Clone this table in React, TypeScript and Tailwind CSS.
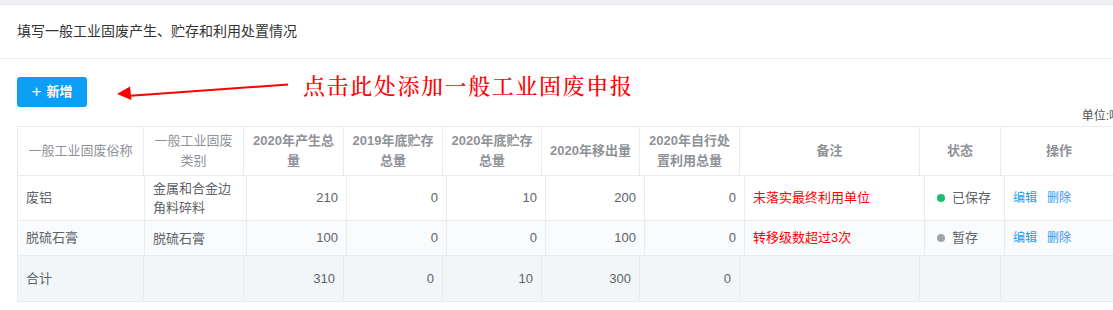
import React from 'react';

// column widths: header & total row share one set, body rows are a few px off (fixed-column table)
const HEAD_COLS = 'grid-cols-[126px_100px_100px_99px_99px_98px_100px_180px_81px_117px]';
const BODY_COLS = 'grid-cols-[127px_102px_100px_100px_99px_99px_100px_180px_80px_113px]';

const HEADERS: { label: React.ReactNode; bold: boolean }[] = [
  { label: '一般工业固废俗称', bold: false },
  { label: <>一般工业固废<br />类别</>, bold: false },
  { label: <>2020年产生总<br />量</>, bold: true },
  { label: <>2019年底贮存<br />总量</>, bold: true },
  { label: <>2020年底贮存<br />总量</>, bold: true },
  { label: '2020年移出量', bold: true },
  { label: <>2020年自行处<br />置利用总量</>, bold: true },
  { label: '备注', bold: true },
  { label: '状态', bold: true },
  { label: '操作', bold: true },
];

const ROWS = [
  {
    name: '废铝',
    type: <>金属和合金边<br />角料碎料</>,
    nums: [210, 0, 10, 200, 0],
    note: '未落实最终利用单位',
    status: '已保存',
    saved: true,
    h: 'h-[45px]',
    bg: 'bg-white',
  },
  {
    name: '脱硫石膏',
    type: '脱硫石膏',
    nums: [100, 0, 0, 100, 0],
    note: '转移级数超过3次',
    status: '暂存',
    saved: false,
    h: 'h-[35px]',
    bg: 'bg-[#fafbfd]',
  },
];

const TOTALS = [310, 0, 10, 300, 0];

const cell = 'border-r border-b border-[#e8ebf0] flex items-center';

const Arrow = () => (
  <svg width="172" height="20" viewBox="0 0 172 20" className="shrink-0">
    <line x1="10" y1="15" x2="171" y2="3.5" stroke="#ff0000" strokeWidth="2" />
    <polygon points="0,16 13,8.5 14.5,22" fill="#ff0000" transform="translate(0,-3)" />
  </svg>
);

const App: React.FC = () => {
  return (
    <div className="w-[1113px] h-[310px] overflow-hidden bg-white font-['Liberation_Sans','Noto_Sans_CJK_SC',sans-serif]">
      <div className="w-[1140px]">
        <div className="h-[5px] bg-[#eef0f4] border-b border-[#e3e6eb]" />

        <div className="h-[54px] flex items-center px-[17px] text-[14px] text-[#333] border-b border-[#ebedf2]">
          填写一般工业固废产生、贮存和利用处置情况
        </div>

        <div className="flex items-center mt-[18px] pl-[17px]">
          <button className="w-[70px] h-[30px] rounded-[3px] bg-[#0ba0f6] text-white text-[13px] font-bold flex items-center justify-center gap-[5px]">
            <span className="text-[17px] font-light leading-none -mt-[2px]">+</span>
            <span>新增</span>
          </button>
          <div className="ml-[30px] mt-[-2px]">
            <Arrow />
          </div>
          <span className="ml-[14px] -mt-[16px] text-[22px] tracking-[1.6px] text-[#ff0000] font-medium font-['Noto_Serif_CJK_SC','Noto_Sans_CJK_SC',serif]">
            点击此处添加一般工业固废申报
          </span>
        </div>

        <div className="w-[1121px] flex justify-end text-[12px] text-[#555] mt-[-2px] h-[21px] items-center">
          单位:吨
        </div>

        <div className="ml-[17px] w-[1100px] border-t border-l border-[#e8ebf0]">
          <div className={`grid ${HEAD_COLS} h-[49px] bg-white`}>
            {HEADERS.map((h, i) => (
              <div
                key={i}
                className={`${cell} justify-center text-center text-[13px] leading-[20px] text-[#8f9297] ${h.bold ? 'font-bold' : 'font-normal'}`}
              >
                {h.label}
              </div>
            ))}
          </div>

          {ROWS.map((r) => (
            <div key={r.name} className={`grid ${BODY_COLS} ${r.h} ${r.bg} text-[13px] text-[#606368]`}>
              <div className={`${cell} px-[8px]`}>{r.name}</div>
              <div className={`${cell} px-[8px] leading-[19px]`}>{r.type}</div>
              {r.nums.map((n, i) => (
                <div key={i} className={`${cell} justify-end px-[8px]`}>{n}</div>
              ))}
              <div className={`${cell} px-[8px] text-[#ff0000]`}>{r.note}</div>
              <div className={`${cell} pl-[12px] gap-[7px]`}>
                <span className={`w-[8px] h-[8px] rounded-full ${r.saved ? 'bg-[#19be6b]' : 'bg-[#a0a4ab]'}`} />
                <span>{r.status}</span>
              </div>
              <div className={`${cell} pl-[8px] gap-[10px] text-[12px] text-[#1c9ff0]`}>
                <span>编辑</span>
                <span>删除</span>
              </div>
            </div>
          ))}

          <div className={`grid ${HEAD_COLS} h-[46px] bg-[#f3f6f9] text-[13px] text-[#606368]`}>
            <div className={`${cell} px-[8px]`}>合计</div>
            <div className={cell} />
            {TOTALS.map((n, i) => (
              <div key={i} className={`${cell} justify-end px-[8px]`}>{n}</div>
            ))}
            <div className={cell} />
            <div className={cell} />
            <div className={cell} />
          </div>
        </div>
      </div>
    </div>
  );
};

export default App;
